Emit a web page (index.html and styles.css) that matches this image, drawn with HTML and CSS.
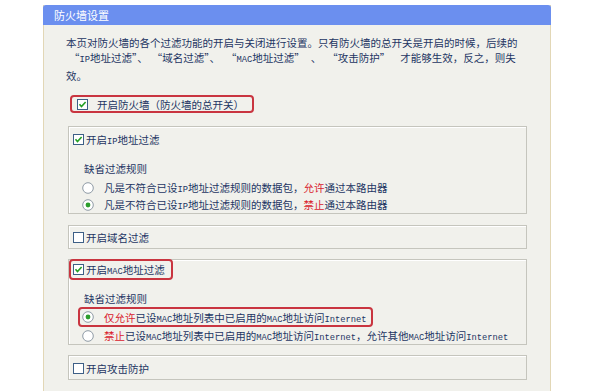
FILE: index.html
```html
<!DOCTYPE html>
<html lang="zh-CN">
<head>
<meta charset="utf-8">
<title>防火墙设置</title>
<link rel="stylesheet" href="styles.css">
</head>
<body>
<div class="panel">
  <div class="header">防火墙设置</div>
  <div class="content">
    <p class="intro">本页对防火墙的各个过滤功能的开启与关闭进行设置。只有防火墙的总开关是开启的时候，后续的<br><span class="indent">“<span class="en">IP</span>地址过滤”、<span class="sp s4"></span>“域名过滤”、<span class="sp s6"></span>“<span class="en">MAC</span>地址过滤”<span class="sp s6"></span>、<span class="sp s6"></span>“攻击防护”<span class="sp s10"></span>才能够生效，反之，则失</span><br>效。</p>

    <div class="master">
      <span class="redbox master-box">
        <svg class="chk" viewBox="0 0 11 11"><rect x="0.5" y="0.5" width="10" height="10" fill="#fff" stroke="#3d5f86"/><path d="M2.5 5.2 L4.5 7.5 L8.6 3" fill="none" stroke="#23a023" stroke-width="1.6"/></svg>
        <span>开启防火墙（防火墙的总开关）</span>
      </span>
    </div>

    <div class="group group-ip">
      <div class="chk-row">
        <svg class="chk" viewBox="0 0 11 11"><rect x="0.5" y="0.5" width="10" height="10" fill="#fff" stroke="#3d5f86"/><path d="M2.5 5.2 L4.5 7.5 L8.6 3" fill="none" stroke="#23a023" stroke-width="1.6"/></svg>
        <span>开启<span class="en">IP</span>地址过滤</span>
      </div>
      <div class="rule-label">缺省过滤规则</div>
      <div class="radio-row">
        <svg class="rad" viewBox="0 0 12 12"><circle cx="6" cy="6" r="5.3" fill="#fff" stroke="#8f9ba6"/></svg>
        <span>凡是不符合已设<span class="en">IP</span>地址过滤规则的数据包，<span class="red">允许</span>通过本路由器</span>
      </div>
      <div class="radio-row">
        <svg class="rad" viewBox="0 0 12 12"><circle cx="6" cy="6" r="5.3" fill="#fff" stroke="#8f9ba6"/><circle cx="6" cy="6" r="2.4" fill="#2d9e2d"/></svg>
        <span>凡是不符合已设<span class="en">IP</span>地址过滤规则的数据包，<span class="red">禁止</span>通过本路由器</span>
      </div>
    </div>

    <div class="group group-simple group-domain">
      <div class="chk-row">
        <svg class="chk" viewBox="0 0 11 11"><rect x="0.5" y="0.5" width="10" height="10" fill="#fff" stroke="#3d5f86"/></svg>
        <span>开启域名过滤</span>
      </div>
    </div>

    <div class="group group-mac">
      <div class="redbox mac-chk">
        <svg class="chk" viewBox="0 0 11 11"><rect x="0.5" y="0.5" width="10" height="10" fill="#fff" stroke="#3d5f86"/><path d="M2.5 5.2 L4.5 7.5 L8.6 3" fill="none" stroke="#23a023" stroke-width="1.6"/></svg>
        <span>开启<span class="en">MAC</span>地址过滤</span>
      </div>
      <div class="rule-label rule-mac">缺省过滤规则</div>
      <div class="redbox mac-radio">
        <svg class="rad" viewBox="0 0 12 12"><circle cx="6" cy="6" r="5.3" fill="#fff" stroke="#8f9ba6"/><circle cx="6" cy="6" r="2.4" fill="#2d9e2d"/></svg>
        <span><span class="red">仅允许</span>已设<span class="en">MAC</span>地址列表中已启用的<span class="en">MAC</span>地址访问<span class="en">Internet</span></span>
      </div>
      <div class="radio-row">
        <svg class="rad" viewBox="0 0 12 12"><circle cx="6" cy="6" r="5.3" fill="#fff" stroke="#8f9ba6"/></svg>
        <span><span class="red">禁止</span>已设<span class="en">MAC</span>地址列表中已启用的<span class="en">MAC</span>地址访问<span class="en">Internet</span>，允许其他<span class="en">MAC</span>地址访问<span class="en">Internet</span></span>
      </div>
    </div>

    <div class="group group-simple group-attack">
      <div class="chk-row">
        <svg class="chk" viewBox="0 0 11 11"><rect x="0.5" y="0.5" width="10" height="10" fill="#fff" stroke="#3d5f86"/></svg>
        <span>开启攻击防护</span>
      </div>
    </div>
  </div>
</div>
</body>
</html>
```

FILE: styles.css
```css
html, body {
  margin: 0;
  padding: 0;
  background: #ffffff;
}

body {
  font-family: "Noto Sans CJK SC", "Noto Sans", sans-serif;
  font-size: 10.5px;
  color: #1d3563;
}

.panel {
  margin: 5px 0 0 43px;
  width: 508px;
  min-height: 400px;
  background: #f1f1ec;
  border-left: 1px solid #e2d7b6;
  border-right: 1px solid #e2d7b6;
  box-sizing: border-box;
}

.header {
  height: 20px;
  line-height: 20px;
  background: #6b8fef;
  color: #ffffff;
  font-size: 11px;
  padding-left: 11px;
  border-radius: 3px 3px 0 0;
  margin: 0 -1px;
}

.content {
  padding: 10px 0 0 22px;
}

.intro {
  margin: 0;
  line-height: 15px;
  white-space: nowrap;
}

.indent {
  padding-left: 3px;
}

.sp {
  display: inline-block;
}
.s4 { width: 4px; }
.s6 { width: 6px; }
.s10 { width: 10px; }

.en {
  font-family: "Liberation Mono", monospace;
  font-size: 8.75px;
}

.red {
  color: #d9222c;
}

.master {
  margin-top: 12px;
  height: 18px;
}

.redbox {
  border: 2px solid #c93540;
  border-radius: 4px;
  box-sizing: border-box;
}

.master-box {
  display: inline-flex;
  align-items: center;
  gap: 9px;
  height: 18px;
  margin-left: 4px;
  padding: 0 8px 0 5px;
}

.chk {
  width: 11px;
  height: 11px;
  flex: none;
  display: block;
}

.rad {
  width: 12px;
  height: 12px;
  flex: none;
  display: block;
}

.group {
  margin-left: 2px;
  width: 459px;
  box-sizing: border-box;
  border: 1px solid #c5c5bd;
  box-shadow: inset 1px 1px 0 #ffffff;
  padding: 5px 0 0 4px;
}

.group-ip {
  margin-top: 13px;
}

.chk-row {
  display: flex;
  align-items: center;
  gap: 2px;
  height: 14px;
}

.rule-label {
  margin-top: 16px;
  margin-left: 11px;
  line-height: 14px;
  margin-bottom: 3px;
}

.radio-row {
  display: flex;
  align-items: center;
  gap: 10px;
  height: 17px;
  margin-left: 9px;
  white-space: nowrap;
}

.group-simple {
  padding: 4px 0 4px 4px;
}

.group-domain {
  margin-top: 11px;
}

.group-mac {
  margin-top: 10px;
  padding-top: 0;
}

.mac-chk {
  display: inline-flex;
  align-items: center;
  gap: 2px;
  height: 21px;
  margin: -1px 0 0 -4px;
  padding: 0 6px 0 2px;
}

.rule-mac {
  margin-top: 12px;
  margin-bottom: 1px;
}

.mac-radio {
  display: inline-flex;
  align-items: center;
  gap: 10px;
  height: 20px;
  margin-left: 5px;
  padding: 0 4px 0 2px;
  white-space: nowrap;
}

.group-attack {
  margin-top: 10px;
  padding-top: 5px;
}
```
